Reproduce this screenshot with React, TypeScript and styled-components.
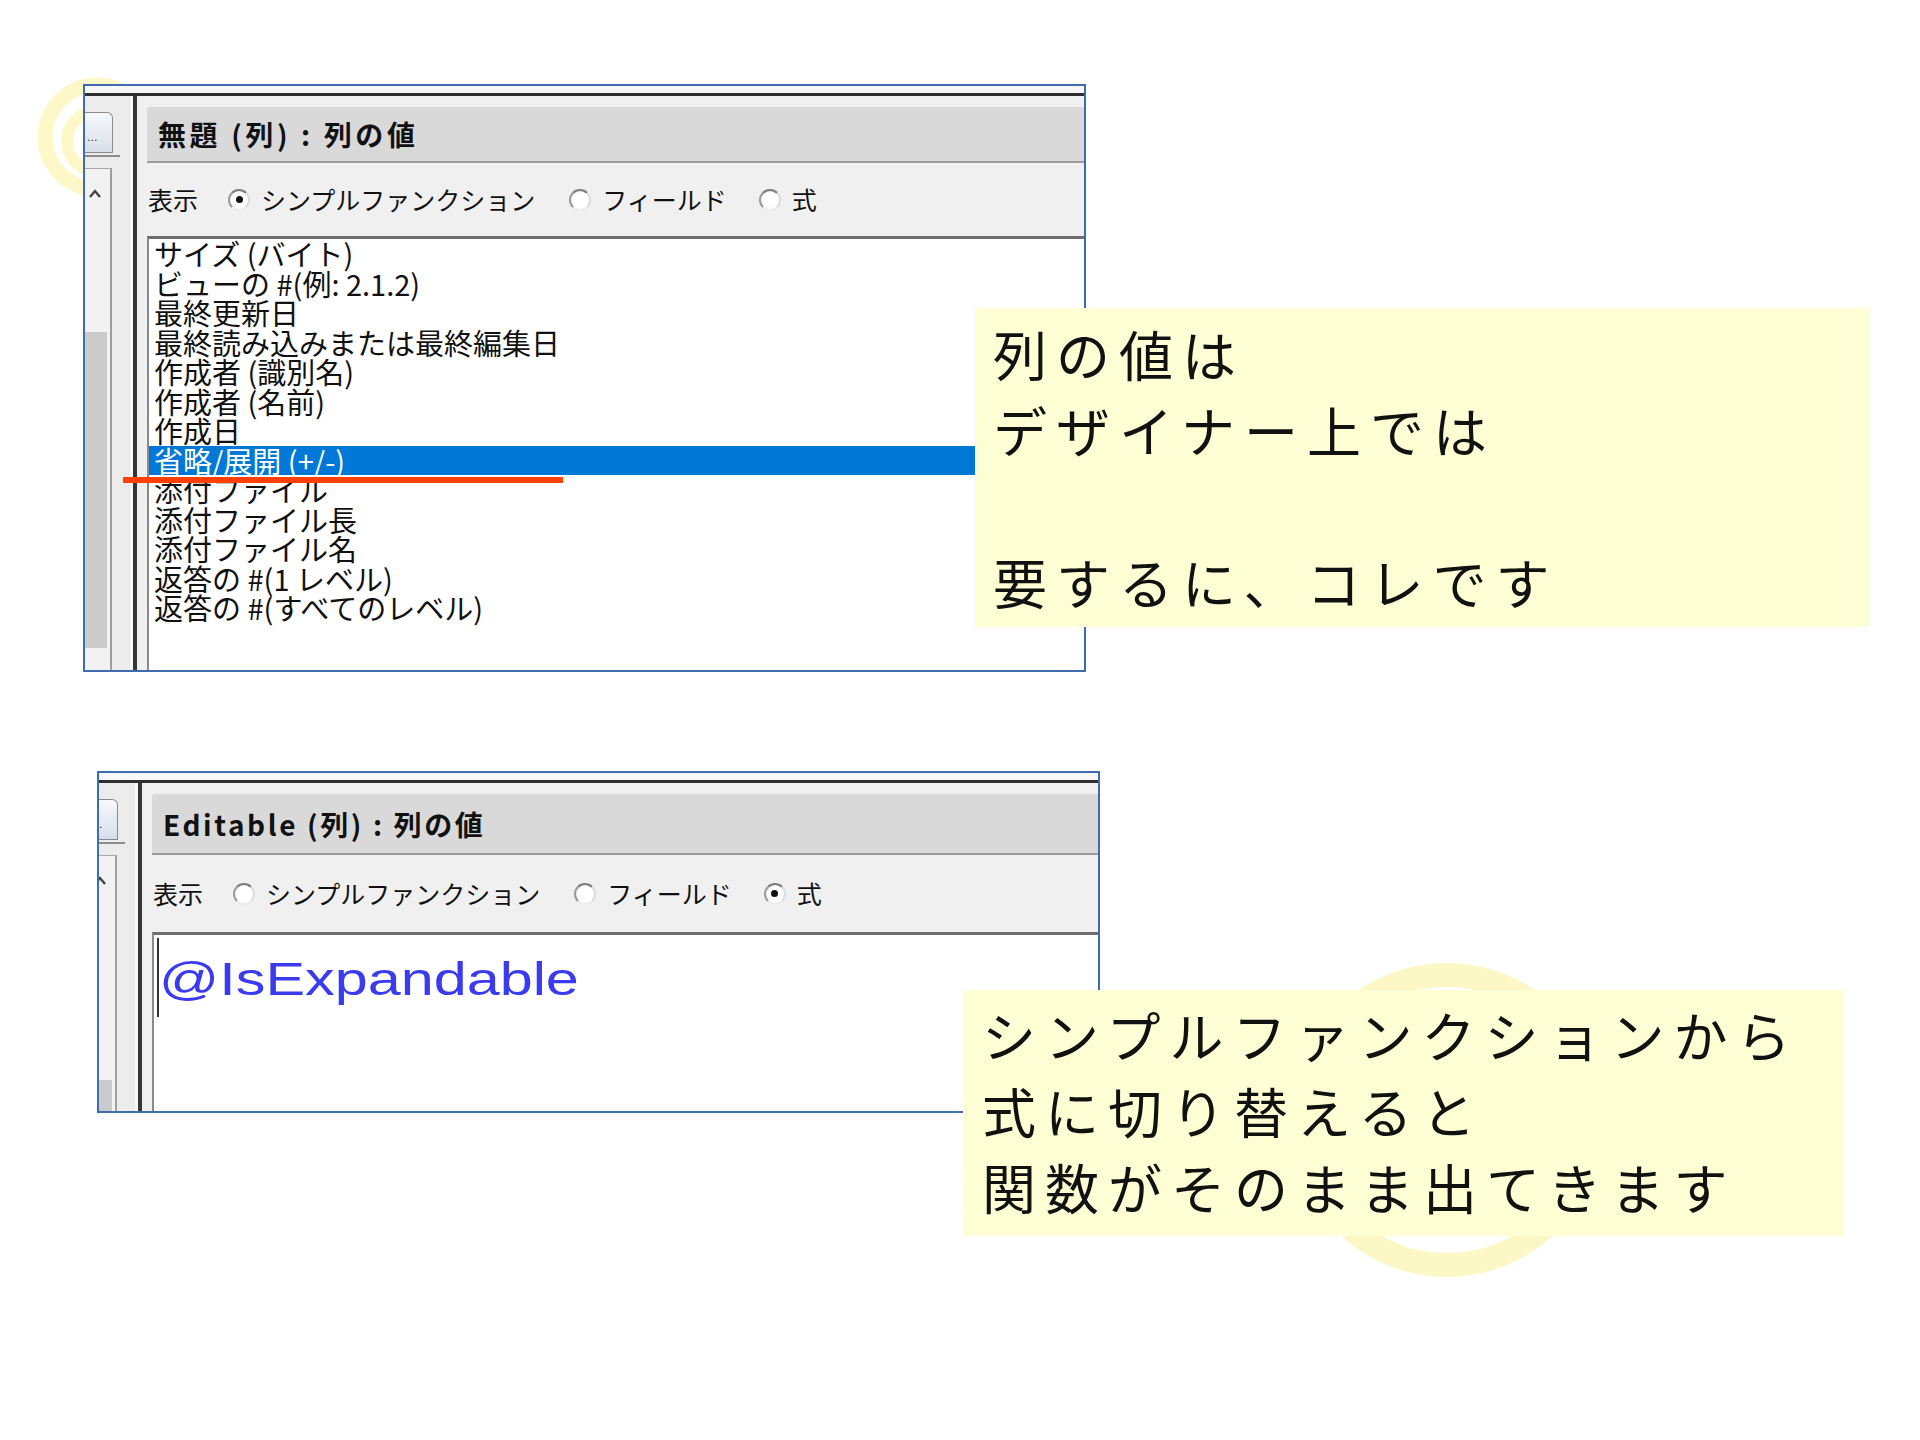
import React from "react";
import styled, { createGlobalStyle } from "styled-components";

const UI_FONT = `"Noto Sans CJK JP", "Noto Sans", sans-serif`;

const GlobalStyle = createGlobalStyle`
  html, body {
    margin: 0;
    padding: 0;
    background: #ffffff;
  }
  body {
    font-family: ${UI_FONT};
  }
`;

const Slide = styled.div`
  position: relative;
  width: 1920px;
  height: 1440px;
  overflow: hidden;
  box-sizing: border-box;
  padding-top: 84px;
  display: flex;
  flex-direction: column;
  align-items: flex-start;
  background: #ffffff;
`;

const Window = styled.section<{ $left: number; $top: number; $height: number }>`
  position: relative;
  z-index: 1;
  margin-left: ${p => p.$left}px;
  margin-top: ${p => p.$top}px;
  width: 1003px;
  height: ${p => p.$height}px;
  box-sizing: border-box;
  border: 2px solid #3f6cb0;
  background: #f0f0f0;
  display: flex;
  flex-direction: column;
  overflow: hidden;
`;

const FrameTop = styled.div`
  flex: none;
  height: 7px;
  background: #f7f7f7;
  border-bottom: 3px solid #2f2f2f;
`;

const Body = styled.div`
  flex: 1;
  min-height: 0;
  display: flex;
`;

const Strip = styled.div<{ $width: number }>`
  flex: none;
  width: ${p => p.$width}px;
  box-sizing: border-box;
  overflow: hidden;
  background: #ececec;
  border-right: 4px solid #353535;
  box-shadow: inset -3px 0 0 #f8f8f8;
  display: flex;
  flex-direction: column;
`;

const Tab = styled.div<{ $shift: number; $top: number }>`
  flex: none;
  margin-top: ${p => p.$top}px;
  margin-left: ${p => p.$shift}px;
  width: 28px;
  height: 41px;
  box-sizing: border-box;
  border: 1px solid #8a8a8a;
  border-left: none;
  border-radius: 0 6px 0 0;
  background: linear-gradient(#f7f9fc, #d6dfe9);
  color: #333;
  font: 400 11px/1 "DejaVu Sans", sans-serif;
  display: flex;
  align-items: flex-end;
  padding: 0 0 9px 2px;
`;

const TabRule = styled.div<{ $shift: number }>`
  flex: none;
  margin-top: 2px;
  margin-left: ${p => p.$shift}px;
  width: 35px;
  height: 2px;
  background: #8c8c8c;
`;

const ScrollBox = styled.div<{ $shift: number }>`
  flex: 1;
  margin-top: 11px;
  margin-left: ${p => p.$shift}px;
  width: 27px;
  box-sizing: border-box;
  border-top: 1px solid #a8a8a8;
  border-right: 2px solid #9e9e9e;
  background: #f2f2f2;
  display: flex;
  flex-direction: column;
`;

const UpArrow = styled.svg`
  flex: none;
  margin: 20px 0 0 3px;
`;

const Thumb = styled.div<{ $height: number; $bottom: number }>`
  margin-top: auto;
  margin-bottom: ${p => p.$bottom}px;
  width: 22px;
  height: ${p => p.$height}px;
  background: #cbcbcb;
`;

const Main = styled.div`
  flex: 1;
  min-width: 0;
  display: flex;
  flex-direction: column;
  padding-left: 10px;
  background: #f0f0f0;
`;

const TitleBar = styled.div<{ $top: number; $height: number; $spacing: number }>`
  flex: none;
  margin-top: ${p => p.$top}px;
  height: ${p => p.$height}px;
  box-sizing: border-box;
  background: #d9d9d9;
  border-bottom: 2px solid #9c9c9c;
  border-top-left-radius: 3px;
  display: flex;
  align-items: center;
  padding-left: 11px;
  color: #111;
  font: 700 28px/1 ${UI_FONT};
  letter-spacing: ${p => p.$spacing}px;
  white-space: nowrap;
`;

const RadioRow = styled.div<{ $height: number }>`
  flex: none;
  height: ${p => p.$height}px;
  display: flex;
  align-items: center;
  padding-left: 1px;
  color: #111;
  font: 400 25px/1 ${UI_FONT};
  white-space: nowrap;
`;

const Option = styled.label<{ $gap: number }>`
  display: flex;
  align-items: center;
  gap: 11px;
  margin-left: ${p => p.$gap}px;
`;

const RadioCircle = styled.span<{ $checked?: boolean }>`
  position: relative;
  width: 22px;
  height: 22px;
  box-sizing: border-box;
  border-radius: 50%;
  border: 2px solid;
  border-color: #7c7c7c #dcdcdc #ececec #9a9a9a;
  background: radial-gradient(circle at 60% 60%, #ffffff 55%, #e6e6e6 100%);

  &::after {
    content: "";
    display: ${p => (p.$checked ? "block" : "none")};
    position: absolute;
    left: 50%;
    top: 50%;
    width: 7px;
    height: 7px;
    margin: -3.5px 0 0 -3.5px;
    border-radius: 50%;
    background: #111;
  }
`;

const ListBox = styled.div`
  flex: 1;
  min-height: 0;
  background: #ffffff;
  border-top: 3px solid #6e6e6e;
  border-left: 2px solid #8a8a8a;
  font: 400 29px/29.5px ${UI_FONT};
  color: #111;
  overflow: hidden;
`;

const ListItem = styled.div<{ $selected?: boolean }>`
  height: 29.5px;
  padding-left: 5px;
  white-space: nowrap;
  background: ${p => (p.$selected ? "#0078d7" : "transparent")};
  color: ${p => (p.$selected ? "#ffffff" : "#111111")};
`;

const Editor = styled.div`
  flex: 1;
  min-height: 0;
  background: #ffffff;
  border-top: 3px solid #6e6e6e;
  border-left: 2px solid #8a8a8a;
  padding-left: 3px;
  display: flex;
  align-items: flex-start;
`;

const Caret = styled.span`
  flex: none;
  margin-top: 3px;
  width: 2px;
  height: 79px;
  background: #333333;
`;

const Formula = styled.span`
  display: inline-block;
  margin-top: 21px;
  color: #3a3af0;
  font: 400 46px/46px "Liberation Sans", Arial, sans-serif;
  transform: scaleX(1.29);
  transform-origin: left center;
  white-space: nowrap;
`;

const Note = styled.div<{ $x: number; $y: number; $w: number; $h: number; $pl: number; $pt: number }>`
  position: absolute;
  z-index: 3;
  left: ${p => p.$x}px;
  top: ${p => p.$y}px;
  width: ${p => p.$w}px;
  height: ${p => p.$h}px;
  box-sizing: border-box;
  padding: ${p => p.$pt}px 0 0 ${p => p.$pl}px;
  background: #fefed4;
  color: #111;
  font: 400 54px/76px ${UI_FONT};
  letter-spacing: 9px;
  white-space: pre;
`;

const Underline = styled.div`
  position: absolute;
  z-index: 2;
  left: 123px;
  top: 477px;
  width: 440px;
  height: 6px;
  background: #ff4000;
`;

const Ring = styled.svg<{ $x: number; $y: number }>`
  position: absolute;
  z-index: 0;
  left: ${p => p.$x}px;
  top: ${p => p.$y}px;
`;

const listItems = [
  "サイズ (バイト)",
  "ビューの #(例: 2.1.2)",
  "最終更新日",
  "最終読み込みまたは最終編集日",
  "作成者 (識別名)",
  "作成者 (名前)",
  "作成日",
  "省略/展開 (+/-)",
  "添付ファイル",
  "添付ファイル長",
  "添付ファイル名",
  "返答の #(1 レベル)",
  "返答の #(すべてのレベル)",
];

type Choice = "simple" | "field" | "formula";

function DisplayOptions({ height, selected }: { height: number; selected: Choice }) {
  return (
    <RadioRow $height={height}>
      <span>表示</span>
      <Option $gap={30}>
        <RadioCircle $checked={selected === "simple"} />
        シンプルファンクション
      </Option>
      <Option $gap={34}>
        <RadioCircle $checked={selected === "field"} />
        フィールド
      </Option>
      <Option $gap={32}>
        <RadioCircle $checked={selected === "formula"} />
        式
      </Option>
    </RadioRow>
  );
}

function SidePanel({ width, shift, thumb, thumbBottom }: { width: number; shift: number; thumb: number; thumbBottom: number }) {
  return (
    <Strip $width={width}>
      <Tab $shift={shift} $top={16}>...</Tab>
      <TabRule $shift={shift} />
      <ScrollBox $shift={shift}>
        <UpArrow width="14" height="10" viewBox="0 0 14 10">
          <polyline points="2,8 7,2 12,8" fill="none" stroke="#444" strokeWidth="2.4" />
        </UpArrow>
        <Thumb $height={thumb} $bottom={thumbBottom} />
      </ScrollBox>
    </Strip>
  );
}

export default function App() {
  return (
    <>
      <GlobalStyle />
      <Slide>
        <Ring $x={20} $y={60} width="160" height="160" viewBox="0 0 160 160">
          <circle cx="77" cy="77" r="52" fill="none" stroke="#fbf6b4" strokeOpacity="0.75" strokeWidth="15" />
          <circle cx="77" cy="81" r="30" fill="none" stroke="#fbf6b4" strokeOpacity="0.75" strokeWidth="12" />
        </Ring>
        <Ring $x={1280} $y={953} width="340" height="340" viewBox="0 0 340 340">
          <circle cx="167" cy="167" r="145" fill="none" stroke="#fcf8c6" strokeWidth="24" />
        </Ring>

        <Window $left={83} $top={0} $height={588}>
          <FrameTop />
          <Body>
            <SidePanel width={52} shift={0} thumb={316} thumbBottom={22} />
            <Main>
              <TitleBar $top={11} $height={56} $spacing={3.6}>無題 (列) : 列の値</TitleBar>
              <DisplayOptions height={73} selected="simple" />
              <ListBox>
                {listItems.map((item, i) => (
                  <ListItem key={item} $selected={i === 7}>
                    {item}
                  </ListItem>
                ))}
              </ListBox>
            </Main>
          </Body>
        </Window>

        <Window $left={97} $top={99} $height={342}>
          <FrameTop />
          <Body>
            <SidePanel width={43} shift={-9} thumb={31} thumbBottom={0} />
            <Main>
              <TitleBar $top={11} $height={61} $spacing={2.6}>Editable (列) : 列の値</TitleBar>
              <DisplayOptions height={77} selected="formula" />
              <Editor>
                <Caret />
                <Formula>@IsExpandable</Formula>
              </Editor>
            </Main>
          </Body>
        </Window>

        <Underline />

        <Note $x={975} $y={308} $w={895} $h={319} $pl={18} $pt={8}>
          {"列の値は\nデザイナー上では\n\n要するに、コレです"}
        </Note>
        <Note $x={963} $y={990} $w={881} $h={246} $pl={19} $pt={7}>
          {"シンプルファンクションから\n式に切り替えると\n関数がそのまま出てきます"}
        </Note>
      </Slide>
    </>
  );
}
